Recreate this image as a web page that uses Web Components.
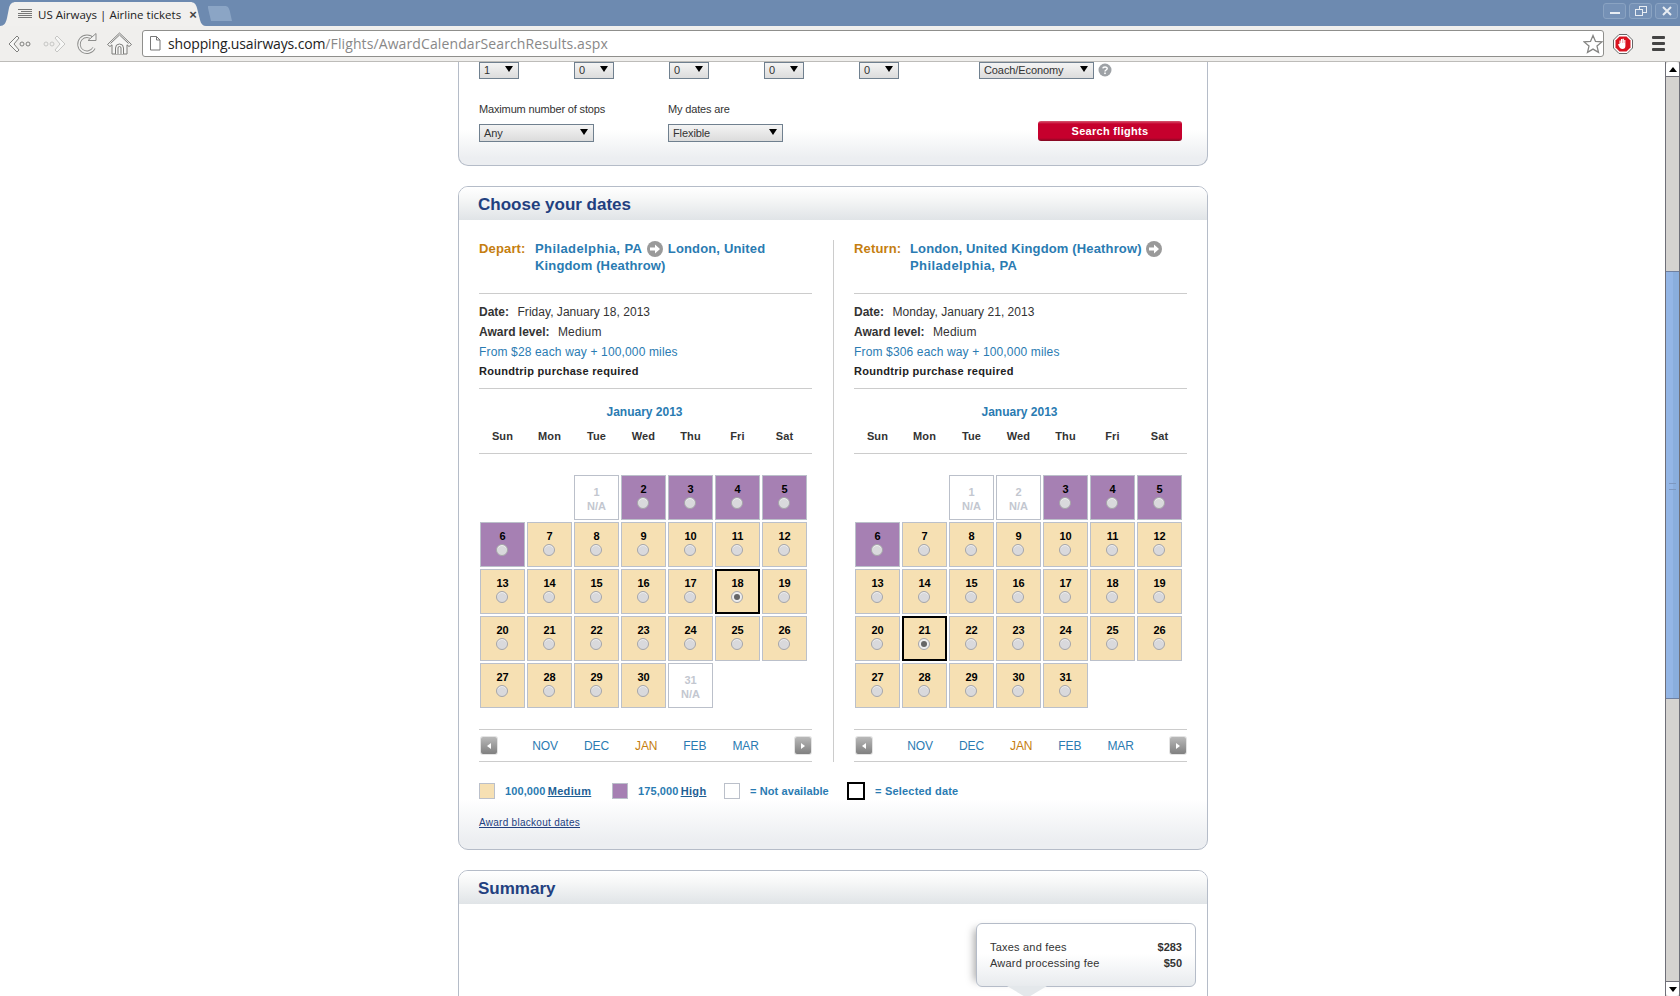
<!DOCTYPE html>
<html>
<head>
<meta charset="utf-8">
<title>US Airways | Airline tickets</title>
<style>
    html, body{ margin: 0; height: 100%; overflow: hidden; background: #fff; }
    body{ font-family: "Liberation Sans", Arial, sans-serif; font-size: 11px; color: #333; }
</style>
</head>
<body>

<browser-window>
    <search-panel></search-panel>
    <content-panel heading="Choose your dates">
        <div style="display:flex;padding-left:20px;">
            <fare-column kind="Depart:" from="Philadelphia, PA" to="London, United" to2="Kingdom (Heathrow)"
                date="Friday, January 18, 2013" price="From $28 each way + 100,000 miles"
                na="1,31" high="2,3,4,5,6" selected="18"></fare-column>
            <div style="width:1px;background:#ccc;margin:20px 20px 0 21px;"></div>
            <fare-column kind="Return:" from="London, United Kingdom (Heathrow)" to="" to2="Philadelphia, PA"
                date="Monday, January 21, 2013" price="From $306 each way + 100,000 miles"
                na="1,2" high="3,4,5,6" selected="21"></fare-column>
        </div>
        <fare-legend></fare-legend>
    </content-panel>
    <content-panel heading="Summary" plain>
        <fee-box></fee-box>
    </content-panel>
</browser-window>

<template id="browser-window">
    <style>
        :host{ display: flex; flex-direction: column; height: 996px; overflow: hidden; }
        .tabs{ height: 26px; background: #6d8ab0; display: flex; position: relative; flex: none; }
        .tab{ width: 206px; height: 24px; margin-top: 2px; background: #f1f0ee; clip-path: path("M0 24C4 24 6 21 7 16L9 6C10 2 12 0 16 0H190C194 0 196 2 197 6L200 18C201 22 203 24 206 24Z"); display: flex; align-items: center; padding-left: 18px; box-sizing: border-box; font: 11.500px "Open Sans", sans-serif; color: #222; white-space: nowrap; }
        .tab svg{ margin-right: 6px; flex: none; }
        .tab .x{ margin-left: 8px; font: bold 13px "Liberation Sans", sans-serif; color: #444; }
        .newtab{ width: 24px; height: 15px; margin: 6px 0 0 2px; background: #8ba5c5; clip-path: path("M0 0H17C20 0 21 2 22 6L24 15H3L0 2Z"); }
        .winbtns{ margin-left: auto; display: flex; gap: 3px; padding: 3px 2px 0 0; }
        .winbtns span{ width: 23px; height: 16px; border: 1px solid #8aa3c2; border-radius: 3px; box-sizing: border-box; background: #7591b6; display: flex; align-items: center; justify-content: center; }
        .toolbar{ height: 35px; flex: none; background: #f0efed; border-bottom: 1px solid #bdbcb9; display: flex; align-items: center; position: relative; }
        .nav{ width: 142px; display: flex; flex: none; padding-left: 7px; box-sizing: border-box; }
        .nav svg{ width: 27px; height: 26px; margin-right: 6px; flex: none; }
        .url{ width: 1462px; height: 27px; flex: none; box-sizing: border-box; background: #fff; border: 1px solid #8f8f8c; border-radius: 3px; display: flex; align-items: center; padding-left: 6px; font: 14px "Open Sans", sans-serif; color: #888; letter-spacing: .11px; white-space: nowrap; position: relative; }
        .url svg.doc{ margin-right: 7px; flex: none; }
        .url b{ font-weight: normal; color: #222; letter-spacing: -.15px; }
        .url svg.star{ position: absolute; right: 0; top: 3px; }
        .abp{ margin-left: 9px; flex: none; }
        .menu{ margin-left: 19px; width: 13px; flex: none; display: flex; flex-direction: column; gap: 3px; }
        .menu i{ display: block; height: 3px; background: #444; border-radius: 1px; }
        .view{ flex: 1; display: flex; min-height: 0; }
        .scroller{ flex: 1; overflow: hidden; background: #fff; }
        .sheet{ width: 750px; margin-left: 458px; }
        page-scrollbar{ flex: none; }
    </style>
    <div class="tabs">
        <div class="tab">
            <svg width="14" height="10" viewBox="0 0 14 10"><path d="M0 .5h14M3 2.500h11M0 4.500h14M0 6.500h14M0 8.500h14" stroke="#777" fill="none"/></svg>
            US Airways | Airline tickets<span class="x">×</span>
        </div>
        <div class="newtab"></div>
        <div class="winbtns">
            <span><svg width="12" height="8"><rect x="1" y="5" width="10" height="2" fill="#e8edf3"/></svg></span>
            <span><svg width="12" height="10" fill="none" stroke="#e8edf3"><rect x="4.500" y=".5" width="7" height="6"/><rect x=".5" y="3.500" width="7" height="6" fill="#7591b6"/></svg></span>
            <span><svg width="12" height="10" stroke="#e8edf3" stroke-width="2"><path d="M2 1l8 8M10 1l-8 8"/></svg></span>
        </div>
    </div>
    <div class="toolbar">
        <div class="nav">
            <svg viewBox="0 0 27 26" fill="none" stroke="#7f7f7d"><path d="M10 5L2 13l8 8 2-2-5-6 5-6z" fill="#f7f7f6"/><circle cx="15" cy="13" r="2"/><circle cx="21" cy="13" r="2"/></svg>
            <svg viewBox="0 0 27 26" fill="none" stroke="#c6c6c4"><path d="M17 5l8 8-8 8-2-2 5-6-5-6z" fill="#f7f7f6"/><circle cx="6" cy="13" r="2"/><circle cx="12" cy="13" r="2"/></svg>
            <svg viewBox="0 0 27 26" fill="none"><path d="M20 8a8 8 0 1 0 1 9" stroke="#8e8e8c" stroke-width="3.400"/><path d="M20 8a8 8 0 1 0 1 9" stroke="#f4f4f3" stroke-width="1.600"/><path d="M15 9.500h8v-7z" fill="#f4f4f3" stroke="#8e8e8c"/></svg>
            <svg viewBox="0 0 27 26" fill="#f6f6f5" stroke="#7c7c7a"><path d="M13.500 2L1.500 13.500l2.500 2 2-1.700V23h15v-9.200l2 1.700 2.500-2z"/><path d="M4.500 12.500l9-8.500 9 8.500" fill="none"/><path d="M9.500 23v-6a4 4 0 0 1 8 0v6M12 23v-6a1.500 1.500 0 0 1 3 0v6"/></svg>
        </div>
        <div class="url">
            <svg class="doc" width="12" height="15" viewBox="0 0 12 15" fill="#fff" stroke="#777"><path d="M1.500.5h6l3.500 3.500v10h-9.500zM7.500.5V4H11"/></svg>
            <span><b>shopping.usairways.com</b>/Flights/AwardCalendarSearchResults.aspx</span>
            <svg class="star" width="20" height="20" viewBox="0 0 20 20" fill="#fff" stroke="#858583" stroke-width="1.300"><path d="M10 1.500l2.500 5.900 6.400.5-4.900 4.200 1.500 6.300L10 15.100 4.500 18.400 6 12.100 1.100 7.900l6.400-.5z"/></svg>
        </div>
        <svg class="abp" width="20" height="20" viewBox="0 0 20 20"><path d="M6 .5h8L19.500 6v8L14 19.500H6L.5 14V6z" fill="#fff" stroke="#666"/><path d="M6.500 2.500h7l4 4v7l-4 4h-7l-4-4v-7z" fill="#d9121f"/><path d="M6.500 10V6.500h1.200V9h.3V5h1.300v4h.3V4.800h1.300V9h.300V6h1.200v6c0 2-1 3-3 3s-2.500-1-3.300-2.500L5 10.500c.5-.5 1-.5 1.500-.5z" fill="#fff"/></svg>
        <div class="menu"><i></i><i></i><i></i></div>
    </div>
    <div class="view">
        <div class="scroller"><div class="sheet"><slot></slot></div></div>
        <page-scrollbar></page-scrollbar>
    </div>
</template>

<template id="page-scrollbar">
    <style>
        :host{ display: flex; flex-direction: column; width: 15px; height: 100%; box-sizing: border-box; border: solid #6f6f78; border-width: 0 1px; background: #d5d3d0; }
        .arrow{ height: 14px; background: #fff; border-radius: 3px 3px 0 0; border-bottom: 1px solid #6f6f78; display: flex; align-items: center; justify-content: center; flex: none; }
        .arrow.down{ border-radius: 0 0 3px 3px; border-bottom: 0; border-top: 1px solid #6f6f78; }
        .arrow i{ border: 4px solid transparent; border-top: 0; border-bottom: 5px solid #000; }
        .arrow.down i{ border-bottom: 0; border-top: 5px solid #000; }
        .thumb{ margin-top: 194px; height: 428px; flex: none; background: linear-gradient(90deg,#94b6e6 0 50%,#8aaedd 50%); border: solid #6f80a0; border-width: 1px 0; box-sizing: border-box; }
        .thumb::after{ content: ""; display: block; width: 7px; height: 5px; margin: 211px auto 0; border: solid #7d97bf; border-width: 1px 0; }
        .fill{ flex: 1; }
    </style>
    <div class="arrow"><i></i></div>
    <div class="thumb"></div>
    <div class="fill"></div>
    <div class="arrow down"><i></i></div>
</template>

<template id="select-box">
    <style>
        :host{ display: inline-flex; align-items: center; justify-content: space-between; box-sizing: border-box; height: 18px; padding: 0 5px 1px 4px; border: 1px solid #70808f; background: linear-gradient(#f4f4f4,#dcdcdc); font: 11px "Liberation Sans", sans-serif; color: #333; letter-spacing: -.1px; }
        i{ border: 4px solid transparent; border-bottom: 0; border-top-width: 6px; border-top-color: #000; margin-bottom: 2px; }
    </style>
    <slot></slot><i></i>
</template>

<template id="search-panel">
    <style>
        :host{ display: block; height: 104px; box-sizing: border-box; border: 1px solid #b5bcc8; border-top: 0; border-radius: 0 0 10px 10px; background: linear-gradient(#fff 0 68px,#eceef1 96px); padding: 0 20px; font: 11px "Liberation Sans", sans-serif; color: #333; letter-spacing: -.15px; }
        .counts{ display: flex; height: 17px; }
        .counts select-box{ width: 40px; height: 17px; margin-right: 55px; }
        .counts select-box.cabin{ width: 115px; margin: 0 0 0 25px; }
        .help{ margin: 1px 0 0 4px; }
        .opts{ display: flex; margin-top: 23px; }
        .opt{ width: 189px; }
        .opt label{ display: block; height: 15px; line-height: 15px; margin-bottom: 7px; }
        .opt select-box{ width: 115px; }
        .go{ margin: 19px 0 0 auto; width: 144px; height: 20px; box-sizing: border-box; border-radius: 3px; background: linear-gradient(#d65a72 0,#c6002d 3px,#c6002d 17px,#7e0a22 100%); color: #fff; font: bold 11px/20px "Liberation Sans", sans-serif; letter-spacing: .3px; text-align: center; transform: translateX(-5px); }
    </style>
    <div class="counts">
        <select-box>1</select-box><select-box>0</select-box><select-box>0</select-box><select-box>0</select-box><select-box>0</select-box>
        <select-box class="cabin">Coach/Economy</select-box>
        <svg class="help" width="14" height="14" viewBox="0 0 14 14"><circle cx="7" cy="7" r="6.500" fill="#9ea2a6"/><path d="M4.800 5.400C5 3.800 9.200 3.500 9.200 5.500c0 1.500-2.200 1.500-2.200 3" fill="none" stroke="#fff" stroke-width="1.500"/><rect x="6.200" y="9.500" width="1.600" height="1.600" fill="#fff"/></svg>
    </div>
    <div class="opts">
        <div class="opt"><label>Maximum number of stops</label><select-box>Any</select-box></div>
        <div class="opt"><label>My dates are</label><select-box>Flexible</select-box></div>
        <div class="go">Search flights</div>
    </div>
</template>

<template id="content-panel">
    <style>
        :host{ display: block; box-sizing: border-box; border: 1px solid #b5bcc8; border-radius: 10px; margin-top: 20px; background: linear-gradient(#fff calc(100% - 50px),#eceef1 calc(100% - 8px)); }
        :host([plain]){ background: #fff; height: 300px; }
        h2{ margin: 0; height: 33px; box-sizing: border-box; padding: 0 0 0 19px; border-radius: 9px 9px 0 0; background: linear-gradient(#fff,#f6f7f7 35%,#e0e4e7); font: bold 17px/35px "Liberation Sans", sans-serif; color: #22407f; }
    </style>
    <h2></h2>
    <slot></slot>
</template>

<template id="fare-column">
    <style>
        :host{ display: block; width: 333px; font: 12px "Liberation Sans", sans-serif; color: #333; letter-spacing: .15px; }
        a{ color: #2a7bb2; text-decoration: none; }
        .route{ display: flex; height: 74px; padding-top: 20px; box-sizing: border-box; border-bottom: 1px solid #ccc; font: bold 13px/17px "Liberation Sans", sans-serif; letter-spacing: .15px; }
        .kind{ width: 56px; flex: none; color: #c57e0f; }
        .where{ color: #2a7bb2; width: 272px; white-space: nowrap; }
        .where svg{ vertical-align: -4px; margin: 0 1px; }
        .wide{ letter-spacing: .4px; }
        .info{ height: 95px; padding-top: 9px; box-sizing: border-box; border-bottom: 1px solid #ccc; }
        .info div{ height: 20px; line-height: 19px; white-space: nowrap; }
        .info b{ display: inline-block; letter-spacing: 0; margin-right: 5px; }
        .info .date{ letter-spacing: .03px; }
        .info .req{ font: bold 11px/17px "Liberation Sans", sans-serif; letter-spacing: .3px; color: #222; }
        .month{ height: 23px; margin-top: 12px; font: bold 12px/22px "Liberation Sans", sans-serif; letter-spacing: 0; text-align: center; color: #2a7bb2; padding-right: 2px; }
        .days{ display: grid; grid-template-columns: repeat(7,45px); column-gap: 2px; padding: 0 0 0 1px; height: 29px; border-bottom: 1px solid #ccc; font: bold 11px/24px "Liberation Sans", sans-serif; text-align: center; margin-bottom: 21px; }
        .grid{ display: grid; grid-template-columns: repeat(7,45px); grid-auto-rows: 45px; gap: 2px; padding-left: 1px; height: 233px; }
        .cell{ box-sizing: border-box; border: 1px solid #bbc0ca; background: #f6e0b3; position: relative; text-align: center; font: bold 11px/13px "Liberation Sans", sans-serif; color: #000; padding-top: 7px; letter-spacing: 0; }
        .cell.high{ background: #a680b3; }
        .cell.na{ background: #fff; color: #c3c7d0; padding-top: 9px; line-height: 14px; }
        .cell.sel{ border: 2px solid #000; padding-top: 6px; }
        .cell i{ display: block; width: 12px; height: 12px; box-sizing: border-box; margin: 1px 0 0 15px; border-radius: 50%; background: #d9d9dc; border: 1px solid #a5a5a9; box-shadow: inset 0 1px 0 #f2f2f2; }
        .cell.sel i::after{ content: ""; display: block; width: 6px; height: 6px; margin: 2px; border-radius: 50%; background: #666; }
        .cell.sel i{ background: #eee; margin-left: 14px; }
        .monthnav{ display: flex; align-items: center; justify-content: space-between; height: 33px; padding: 0 1px 0 2px; margin-top: 21px; border: solid #ccc; border-width: 1px 0; box-sizing: border-box; }
        .months{ display: flex; gap: 26px; font-size: 12px; letter-spacing: -.1px; margin-left: -1px; }
        .cur{ color: #c57e0f; }
        .arr{ width: 16px; height: 17px; border-radius: 2px; background: linear-gradient(#b9b9b9,#808080); box-shadow: 0 0 0 1px #e4e4e4; display: flex; align-items: center; justify-content: center; flex: none; }
        .arr u{ border: 3px solid transparent; border-left: 0; border-right: 4px solid #fff; }
        .arr.n u{ border-right: 0; border-left: 4px solid #fff; }
    </style>
    <div class="route">
        <div class="kind"></div>
        <div class="where"><span class="a"></span> <svg width="16" height="16" viewBox="0 0 16 16"><circle cx="8" cy="8" r="8" fill="#9a9a9a"/><path d="M3 6.500h5V3.500L13 8l-5 4.500v-3H3z" fill="#fff"/></svg> <span class="b"></span><br><span class="c"></span></div>
    </div>
    <div class="info">
        <div><b>Date:</b> <span class="date"></span></div>
        <div><b>Award level:</b> Medium</div>
        <div><a class="price" href="#"></a></div>
        <div class="req">Roundtrip purchase required</div>
    </div>
    <div class="month">January 2013</div>
    <div class="days"><span>Sun</span><span>Mon</span><span>Tue</span><span>Wed</span><span>Thu</span><span>Fri</span><span>Sat</span></div>
    <div class="grid"></div>
    <div class="monthnav">
        <span class="arr"><u></u></span>
        <div class="months"><a href="#">NOV</a><a href="#">DEC</a><a href="#" class="cur">JAN</a><a href="#">FEB</a><a href="#">MAR</a></div>
        <span class="arr n"><u></u></span>
    </div>
</template>

<template id="fare-legend">
    <style>
        :host{ display: block; height: 87px; padding: 20px 0 0 20px; box-sizing: border-box; font: bold 11px "Liberation Sans", sans-serif; color: #2a7bb2; letter-spacing: .1px; }
        .row{ display: flex; align-items: center; height: 18px; }
        .sw{ width: 16px; height: 16px; box-sizing: border-box; border: 1px solid #bbc0ca; margin-right: 10px; flex: none; }
        .txt{ flex: none; white-space: nowrap; }
        .txt.tight{ word-spacing: -1px; }
        u{ color: #1f5f95; letter-spacing: .35px; }
        .blk{ margin-top: 16px; font-weight: normal; font-size: 10px; letter-spacing: .28px; color: #22407f; text-decoration: underline; display: block; line-height: 14px; }
    </style>
    <div class="row">
        <span class="sw" style="background:#f6e0b3"></span><span class="txt tight" style="width:107px">100,000 <u>Medium</u></span>
        <span class="sw" style="background:#a680b3"></span><span class="txt tight" style="width:86px">175,000 <u>High</u></span>
        <span class="sw"></span><span class="txt" style="width:97px">= Not available</span>
        <span class="sw" style="border:2px solid #000;width:18px;height:18px;"></span><span class="txt" style="letter-spacing:.2px">= Selected date</span>
    </div>
    <span class="blk">Award blackout dates</span>
</template>

<template id="fee-box">
    <style>
        :host{ display: block; width: 220px; height: 64px; margin: 19px 0 0 517px; box-sizing: border-box; position: relative; border: 1px solid #b5bcc8; border-radius: 6px; padding: 15px 13px 0 13px; background: linear-gradient(#fff 48%,#e8ebee); box-shadow: -8px 0 8px -6px #aaa; font: 11px/16px "Liberation Sans", sans-serif; color: #333; letter-spacing: .2px; }
        div{ display: flex; justify-content: space-between; }
        b{ letter-spacing: 0; }
        :host::after{ content: ""; position: absolute; left: 30px; top: 62px; border: 20px solid transparent; border-bottom: 0; border-top: 12px solid #e4e8eb; }
    </style>
    <div><span>Taxes and fees</span><b>$283</b></div>
    <div><span>Award processing fee</span><b>$50</b></div>
</template>

<script type="text/javascript">
    // every element just clones its own template in an open shadow root
    class BaseElement extends HTMLElement{
        constructor(){
            super();
            this.attachShadow({mode: 'open'});
            const template = document.getElementById(this.localName);
            this.shadowRoot.appendChild(template.content.cloneNode(true));
        }
    }

    class ContentPanel extends BaseElement{
        connectedCallback(){
            this.shadowRoot.querySelector('h2').textContent = this.getAttribute('heading');
        }
    }

    class FareColumn extends BaseElement{
        connectedCallback(){
            const root = this.shadowRoot;
            root.querySelector('.kind').textContent = this.getAttribute('kind');
            root.querySelector('.date').textContent = this.getAttribute('date');
            root.querySelector('.price').textContent = this.getAttribute('price');

            [['.a','from'],['.b','to'],['.c','to2']].forEach(([sel, attr]) => {
                const text = this.getAttribute(attr);
                const span = root.querySelector(sel);
                span.textContent = text;
                if(text.startsWith('Philadelphia')) span.classList.add('wide'); // renders a bit wider in the original
            });

            const na = this.getAttribute('na').split(',');
            const high = this.getAttribute('high').split(',');
            const selected = this.getAttribute('selected');
            let html = '<span></span><span></span>'; // jan 2013 starts on a tuesday
            for(let d = 1; d <= 31; d++){
                const day = String(d);
                if(na.includes(day)){
                    html += `<div class="cell na">${day}<br>N/A</div>`;
                }else{
                    const cls = high.includes(day) ? 'high' : (day === selected ? 'sel' : '');
                    html += `<div class="cell ${cls}">${day}<i></i></div>`;
                }
            }
            root.querySelector('.grid').innerHTML = html;
        }
    }

    ['browser-window','page-scrollbar','select-box','search-panel','fare-legend','fee-box'].forEach(name => {
        window.customElements.define(name, class extends BaseElement{});
    });
    window.customElements.define('content-panel', ContentPanel);
    window.customElements.define('fare-column', FareColumn);
</script>
</body>
</html>
